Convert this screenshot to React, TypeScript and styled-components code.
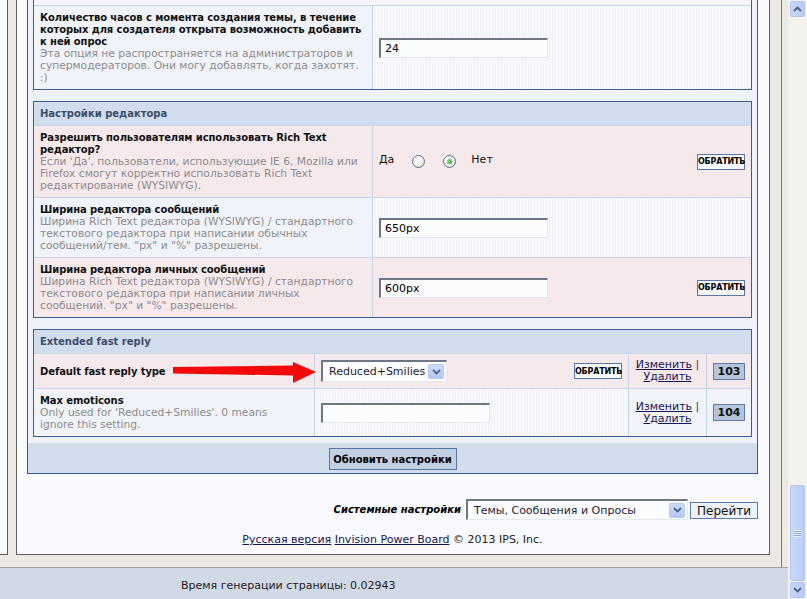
import React from 'react'
import styled, { createGlobalStyle } from 'styled-components'

const GlobalStyle = createGlobalStyle`
  html, body { margin: 0; padding: 0; }
  body {
    width: 807px;
    height: 599px;
    overflow: hidden;
    background: #ece9e4;
    font-family: "DejaVu Sans", Verdana, sans-serif;
    font-size: 11px;
    color: #000;
  }
`

const Screen = styled.div`
  position: relative;
  display: flex;
  width: 807px;
  height: 599px;
`

const Workspace = styled.div`
  display: flex;
  flex-direction: column;
  width: 788px;
`

const Frame = styled.div`
  display: flex;
  height: 567px;
  border-bottom: 1px solid #a3a3a3;
  background: #ece9e4;
`

const FrameInner = styled.div`
  display: flex;
  align-items: flex-start;
  gap: 8px;
  padding-right: 11px;
  border-right: 1px solid #777;
`

const NavStub = styled.div`
  width: 7px;
  height: 554px;
  background: #f9fafd;
  border-right: 1px solid #5a5a5a;
  border-bottom: 1px solid #5a5a5a;
`

const MainPanel = styled.div`
  display: flex;
  flex-direction: column;
  width: 731px;
  height: 554px;
  padding: 0 11px 0 10px;
  background: #f9fafd;
  border: 1px solid #626262;
  border-top: none;
`

const SettingsForm = styled.div`
  display: flex;
  flex-direction: column;
  background: #eef1f7;
  border: 1px solid #3b5a8d;
  border-top: none;
`

const Sections = styled.div`
  display: flex;
  flex-direction: column;
  gap: 11px;
  padding: 0 5px 5px;
`

const Section = styled.div<{ $cut?: boolean }>`
  border: 1px solid #3d5c90;
  border-top: ${p => (p.$cut ? 'none' : '1px solid #3d5c90')};
`

const SectionHeader = styled.div`
  padding: 5px 6px;
  line-height: 13px;
  font-size: 10px;
  font-weight: bold;
  color: #3b4e6b;
  background: #d1dcec;
`

const StubRow = styled.div`
  height: 5px;
  background: #f3f5f9;
`

const Row = styled.div<{ $cols: string; $tone: 'pink' | 'light' }>`
  display: grid;
  grid-template-columns: ${p => p.$cols};
  border-top: 1px solid #c9d5e6;
  background: ${p => (p.$tone === 'pink' ? '#f6e9ec' : '#f0f3f9')};
`

const LabelCell = styled.div<{ $center?: boolean }>`
  display: flex;
  flex-direction: column;
  justify-content: ${p => (p.$center ? 'center' : 'flex-start')};
  padding: 6px 6px 5px;
  line-height: 12px;
`

const Title = styled.div`
  font-size: 10px;
  font-weight: bold;
  letter-spacing: -0.1px;
  color: #111;
`

const Desc = styled.div`
  font-size: 10.7px;
  color: #8c8c8c;
`

const ValueCell = styled.div<{ $tone: 'pink' | 'light' }>`
  display: flex;
  align-items: center;
  justify-content: space-between;
  padding: 5px 6px;
  border-left: 1px solid #c9d5e6;
  background: ${p =>
    p.$tone === 'light'
      ? 'repeating-linear-gradient(90deg, #f6f8fb 0 2px, #eff2f7 2px 3px)'
      : 'transparent'};
`

const LinksCell = styled.div`
  display: flex;
  flex-direction: column;
  justify-content: center;
  align-items: center;
  padding: 5px 4px;
  line-height: 12px;
  border-left: 1px solid #c9d5e6;
`

const IdCell = styled.div`
  display: flex;
  align-items: center;
  justify-content: center;
  border-left: 1px solid #c9d5e6;
`

const Link = styled.a`
  color: #14145e;
  text-decoration: underline;
  cursor: pointer;
`

const Pipe = styled.span`
  color: #444;
`

const IdBadge = styled.div`
  width: 30px;
  height: 15px;
  line-height: 15px;
  text-align: center;
  font-weight: bold;
  background: #b7c4d8;
  border: 1px solid #5a79ac;
  color: #111;
`

const TextInput = styled.div<{ $width?: number }>`
  box-sizing: border-box;
  width: ${p => p.$width ?? 169}px;
  height: 20px;
  padding: 0 4px;
  line-height: 17px;
  font-size: 11px;
  background: #fbfcfe;
  border-top: 2px solid #6f7785;
  border-left: 2px solid #6f7785;
  border-right: 1px solid #e3e7ee;
  border-bottom: 1px solid #e3e7ee;
`

const RevertButton = styled.button`
  box-sizing: border-box;
  width: 48px;
  height: 16px;
  padding: 0;
  font-family: "DejaVu Sans", Verdana, sans-serif;
  font-size: 8px;
  font-weight: bold;
  letter-spacing: -0.2px;
  color: #000;
  background: #f8f9fc;
  border: 1px solid #5877ad;
`

const RadioGroup = styled.div`
  display: flex;
  align-items: center;
  gap: 18px;
  font-size: 11px;
`

const RadioLabel = styled.span`
  margin-top: -4px;
  color: #111;
`

const Radio = styled.span<{ $checked?: boolean }>`
  position: relative;
  box-sizing: border-box;
  width: 13px;
  height: 13px;
  border-radius: 50%;
  border: 1px solid #5c6f8c;
  background: radial-gradient(circle at 35% 30%, #fff 0, #f2f2ee 45%, #d6d3c8 100%);
  margin-right: ${p => (p.$checked ? '-3px' : '0')};

  &::after {
    content: '';
    display: ${p => (p.$checked ? 'block' : 'none')};
    position: absolute;
    left: 3px;
    top: 3px;
    width: 5px;
    height: 5px;
    border-radius: 50%;
    background: radial-gradient(circle at 40% 40%, #7ee07e, #21a121);
  }
`

const SelectBox = styled.div<{ $width: number; $height: number }>`
  box-sizing: border-box;
  display: flex;
  align-items: center;
  justify-content: space-between;
  width: ${p => p.$width}px;
  height: ${p => p.$height}px;
  padding: 0 2px 0 6px;
  background: #fbfcfe;
  border-top: 2px solid #6f7785;
  border-left: 2px solid #6f7785;
  border-right: 1px solid #e3e7ee;
  border-bottom: 1px solid #e3e7ee;
  color: #1d1d3a;
`

const SelectArrow = styled.span`
  display: flex;
  align-items: center;
  justify-content: center;
  width: 16px;
  height: 15px;
  border-radius: 2px;
  background: linear-gradient(#cfdcf9, #b3c6f1);
  border: 1px solid #b8c9ee;
  box-sizing: border-box;
`

const SubmitBar = styled.div`
  display: flex;
  justify-content: center;
  padding: 5px 0 3px;
  background: #d1dcec;
  border-top: 1px solid #f7f8fb;
`

const SubmitButton = styled.button`
  box-sizing: border-box;
  width: 128px;
  height: 22px;
  padding: 0;
  white-space: nowrap;
  font-family: "DejaVu Sans", Verdana, sans-serif;
  font-size: 10px;
  font-weight: bold;
  color: #000;
  background: #c3cfe2;
  border: 1px solid #5775a7;
`

const JumpBar = styled.div`
  display: flex;
  align-items: center;
  justify-content: flex-end;
  gap: 4px;
  margin-top: 25px;
`

const JumpLabel = styled.span`
  font-size: 10px;
  font-weight: bold;
  font-style: italic;
  margin-right: 1px;
`

const GoButton = styled.button`
  box-sizing: border-box;
  width: 68px;
  height: 17px;
  padding: 0;
  margin-left: -2px;
  margin-top: 2px;
  font-family: "DejaVu Sans", Verdana, sans-serif;
  font-size: 12px;
  color: #111;
  background: #eef2f9;
  border: 1px solid #5a7ab0;
`

const Copyright = styled.div`
  margin-top: 13px;
  text-align: center;
  color: #222;
`

const StatusBar = styled.div`
  flex: 1;
  display: flex;
  align-items: center;
  padding-left: 181px;
  padding-top: 3px;
  background: #d2d9e6;
  color: #222;
`

const ScrollTrack = styled.div`
  display: flex;
  flex-direction: column;
  align-items: center;
  width: 19px;
  padding: 1px 0;
  box-sizing: border-box;
  background: #f4f2ec;
`

const ScrollButton = styled.div`
  box-sizing: border-box;
  display: flex;
  align-items: center;
  justify-content: center;
  width: 15px;
  height: 16px;
  border-radius: 2px;
  background: linear-gradient(90deg, #c9d8fb, #b8cbf6);
  border: 1px solid #b3c5ee;
`

const ScrollThumb = styled.div`
  box-sizing: border-box;
  display: flex;
  align-items: center;
  justify-content: center;
  width: 15px;
  height: 96px;
  margin-top: auto;
  margin-bottom: 1px;
  border-radius: 2px;
  background: linear-gradient(90deg, #cad9fb, #bacdf7);
  border: 1px solid #b3c5ee;
`

const Grip = styled.div`
  width: 7px;
  height: 7px;
  background: repeating-linear-gradient(#eef3fe 0 1px, #8ea6dc 1px 2px);
`

const ArrowOverlay = styled.svg`
  position: absolute;
  left: 0;
  top: 0;
  pointer-events: none;
`

const Chevron = ({ up }: { up?: boolean }) => (
  <svg width="9" height="6" viewBox="0 0 9 6">
    <path
      d={up ? 'M1 5 L4.5 1.5 L8 5' : 'M1 1 L4.5 4.5 L8 1'}
      fill="none"
      stroke="#4d6188"
      strokeWidth="1.8"
    />
  </svg>
)

const COLS_TWO = '338px 1fr'
const COLS_FOUR = '280px 314px 78px 1fr'

export default function App() {
  return (
    <>
      <GlobalStyle />
      <Screen>
        <Workspace>
          <Frame>
            <FrameInner>
              <NavStub />
              <MainPanel>
                <SettingsForm>
                  <Sections>
                    <Section $cut>
                      <StubRow />
                      <Row $cols={COLS_TWO} $tone="light">
                        <LabelCell>
                          <Title>
                            Количество часов с момента создания темы, в течение которых для
                            создателя открыта возможность добавить к ней опрос
                          </Title>
                          <Desc>
                            Эта опция не распространяется на администраторов и
                            <br />
                            супермодераторов. Они могу добавлять, когда захотят.
                            <br />
                            :)
                          </Desc>
                        </LabelCell>
                        <ValueCell $tone="light">
                          <TextInput>24</TextInput>
                        </ValueCell>
                      </Row>
                    </Section>

                    <Section>
                      <SectionHeader>Настройки редактора</SectionHeader>
                      <Row $cols={COLS_TWO} $tone="pink">
                        <LabelCell>
                          <Title>Разрешить пользователям использовать Rich Text редактор?</Title>
                          <Desc>
                            Если 'Да', пользователи, использующие IE 6, Mozilla или
                            <br />
                            Firefox смогут корректно использовать Rich Text
                            <br />
                            редактирование (WYSIWYG).
                          </Desc>
                        </LabelCell>
                        <ValueCell $tone="pink">
                          <RadioGroup>
                            <RadioLabel>Да</RadioLabel>
                            <Radio />
                            <Radio $checked />
                            <RadioLabel>Нет</RadioLabel>
                          </RadioGroup>
                          <RevertButton>ОБРАТИТЬ</RevertButton>
                        </ValueCell>
                      </Row>
                      <Row $cols={COLS_TWO} $tone="light">
                        <LabelCell>
                          <Title>Ширина редактора сообщений</Title>
                          <Desc>
                            Ширина Rich Text редактора (WYSIWYG) / стандартного
                            <br />
                            текстового редактора при написании обычных
                            <br />
                            сообщений/тем. "px" и "%" разрешены.
                          </Desc>
                        </LabelCell>
                        <ValueCell $tone="light">
                          <TextInput>650px</TextInput>
                        </ValueCell>
                      </Row>
                      <Row $cols={COLS_TWO} $tone="pink">
                        <LabelCell>
                          <Title>Ширина редактора личных сообщений</Title>
                          <Desc>
                            Ширина Rich Text редактора (WYSIWYG) / стандартного
                            <br />
                            текстового редактора при написании личных
                            <br />
                            сообщений. "px" и "%" разрешены.
                          </Desc>
                        </LabelCell>
                        <ValueCell $tone="pink">
                          <TextInput>600px</TextInput>
                          <RevertButton>ОБРАТИТЬ</RevertButton>
                        </ValueCell>
                      </Row>
                    </Section>

                    <Section>
                      <SectionHeader>Extended fast reply</SectionHeader>
                      <Row $cols={COLS_FOUR} $tone="pink">
                        <LabelCell $center>
                          <Title>Default fast reply type</Title>
                        </LabelCell>
                        <ValueCell $tone="pink">
                          <SelectBox $width={126} $height={22}>
                            Reduced+Smilies
                            <SelectArrow>
                              <Chevron />
                            </SelectArrow>
                          </SelectBox>
                          <RevertButton>ОБРАТИТЬ</RevertButton>
                        </ValueCell>
                        <LinksCell>
                          <div>
                            <Link>Изменить</Link> <Pipe>|</Pipe>
                          </div>
                          <Link>Удалить</Link>
                        </LinksCell>
                        <IdCell>
                          <IdBadge>103</IdBadge>
                        </IdCell>
                      </Row>
                      <Row $cols={COLS_FOUR} $tone="light">
                        <LabelCell>
                          <Title>Max emoticons</Title>
                          <Desc>
                            Only used for 'Reduced+Smilies'. 0 means
                            <br />
                            ignore this setting.
                          </Desc>
                        </LabelCell>
                        <ValueCell $tone="light">
                          <TextInput />
                        </ValueCell>
                        <LinksCell>
                          <div>
                            <Link>Изменить</Link> <Pipe>|</Pipe>
                          </div>
                          <Link>Удалить</Link>
                        </LinksCell>
                        <IdCell>
                          <IdBadge>104</IdBadge>
                        </IdCell>
                      </Row>
                    </Section>
                  </Sections>
                  <SubmitBar>
                    <SubmitButton>Обновить настройки</SubmitButton>
                  </SubmitBar>
                </SettingsForm>

                <JumpBar>
                  <JumpLabel>Системные настройки</JumpLabel>
                  <SelectBox $width={222} $height={21}>
                    Темы, Сообщения и Опросы
                    <SelectArrow>
                      <Chevron />
                    </SelectArrow>
                  </SelectBox>
                  <GoButton>Перейти</GoButton>
                </JumpBar>

                <Copyright>
                  <Link>Русская версия</Link> <Link>Invision Power Board</Link> © 2013 IPS, Inc.
                </Copyright>
              </MainPanel>
            </FrameInner>
          </Frame>
          <StatusBar>Время генерации страницы: 0.02943</StatusBar>
        </Workspace>

        <ScrollTrack>
          <ScrollButton>
            <Chevron up />
          </ScrollButton>
          <ScrollThumb>
            <Grip />
          </ScrollThumb>
          <ScrollButton>
            <Chevron />
          </ScrollButton>
        </ScrollTrack>

        <ArrowOverlay width="807" height="599">
          <polygon
            points="173,367 293,365.5 293,362 316,372 293,383 293,375.5 173,373.5"
            fill="#f20a0a"
          />
        </ArrowOverlay>
      </Screen>
    </>
  )
}
